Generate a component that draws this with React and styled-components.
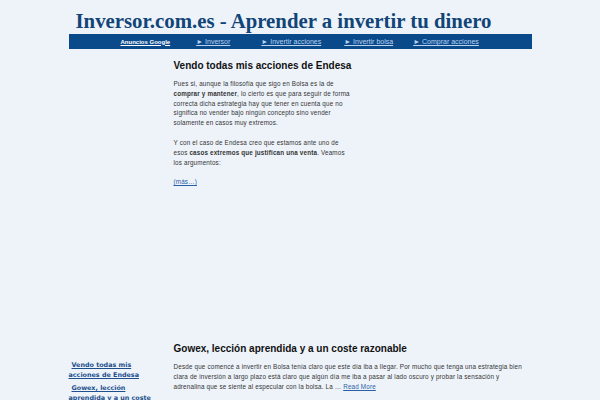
import React from "react";
import styled, { createGlobalStyle } from "styled-components";

const Global = createGlobalStyle`
  html, body { margin: 0; padding: 0; background: #eef3fa; }
  body { font-family: "Liberation Sans", Arial, sans-serif; color: #222; }
`;

const Page = styled.div`
  width: 463px;
  margin: 0 auto;
  padding-top: 8px;
`;

const SiteTitle = styled.h1`
  margin: 0 0 0 7px;
  font-family: "Liberation Serif", "Times New Roman", serif;
  font-weight: bold;
  font-size: 20.8px;
  line-height: 26px;
  color: #124577;
  white-space: nowrap;
`;

const Nav = styled.nav`
  display: flex;
  align-items: center;
  height: 15px;
  background: #0a4a8b;
  padding-left: 52px;
`;

const NavLink = styled.a`
  color: ${(p) => (p.$ad ? "#ffffff" : "#b9d3f0")};
  font-weight: ${(p) => (p.$ad ? "bold" : "normal")};
  text-decoration: underline;
  margin-right: ${(p) => p.$gap}px;
  white-space: nowrap;
  font-size: ${(p) => (p.$ad ? "6px" : "7px")};
`;

const Body = styled.div`
  display: flex;
`;

const Sidebar = styled.aside`
  width: 92px;
  flex-shrink: 0;
  padding-top: 311px;
  font-family: "DejaVu Sans", Verdana, sans-serif;
`;

const SideLink = styled.a`
  display: block;
  color: #1c4f8c;
  font-weight: bold;
  font-size: 6.4px;
  line-height: 10px;
  text-decoration: underline;
  margin-bottom: 2.5px;
  text-indent: 3px;
`;

const Main = styled.main`
  flex: 1;
  padding-left: 13px;
`;

const Post = styled.article`
  min-height: ${(p) => p.$minh || 0}px;
  width: ${(p) => p.$w || "auto"};
`;

const PostTitle = styled.h2`
  margin: 10px 0 0 0;
  font-size: 10px;
  line-height: 14px;
  font-weight: bold;
  color: #111;
  white-space: nowrap;
`;

const Para = styled.p`
  margin: 6px 0 10px 0;
  font-size: 6.3px;
  line-height: 9.8px;
  color: #333;
  letter-spacing: 0.17px;
`;

const More = styled.a`
  color: #2a5fa3;
  text-decoration: underline;
`;

export default function App() {
  return (
    <>
      <Global />
      <Page>
        <SiteTitle>Inversor.com.es - Aprender a invertir tu dinero</SiteTitle>
        <Nav>
          <NavLink $ad $gap={26}>Anuncios Google</NavLink>
          <NavLink $gap={31}>► Inversor</NavLink>
          <NavLink $gap={23}>► Invertir acciones</NavLink>
          <NavLink $gap={20}>► Invertir bolsa</NavLink>
          <NavLink $gap={0}>► Comprar acciones</NavLink>
        </Nav>
        <Body>
          <Sidebar>
            <SideLink>Vendo todas mis acciones de Endesa</SideLink>
            <SideLink>Gowex, lección aprendida y a un coste razonable</SideLink>
          </Sidebar>
          <Main>
            <Post $minh={273} $w="180px">
              <PostTitle>Vendo todas mis acciones de Endesa</PostTitle>
              <Para>
                Pues si, aunque la filosofía que sigo en Bolsa es la de <b>comprar y mantener</b>, lo cierto es que para seguir de forma correcta dicha estrategia hay que tener en cuenta que no significa no vender bajo ningún concepto sino vender solamente en casos muy extremos.
              </Para>
              <Para>
                Y con el caso de Endesa creo que estamos ante uno de esos <b>casos extremos que justifican una venta</b>. Veamos los argumentos:
              </Para>
              <Para>
                <More>(más…)</More>
              </Para>
            </Post>
            <Post>
              <PostTitle>Gowex, lección aprendida y a un coste razonable</PostTitle>
              <Para>
                Desde que comencé a invertir en Bolsa tenía claro que este día iba a llegar. Por mucho que tenga una estrategia bien clara de inversión a largo plazo está claro que algún día me iba a pasar al lado oscuro y probar la sensación y adrenalina que se siente al especular con la bolsa. La … <More>Read More</More>
              </Para>
            </Post>
          </Main>
        </Body>
      </Page>
    </>
  );
}
